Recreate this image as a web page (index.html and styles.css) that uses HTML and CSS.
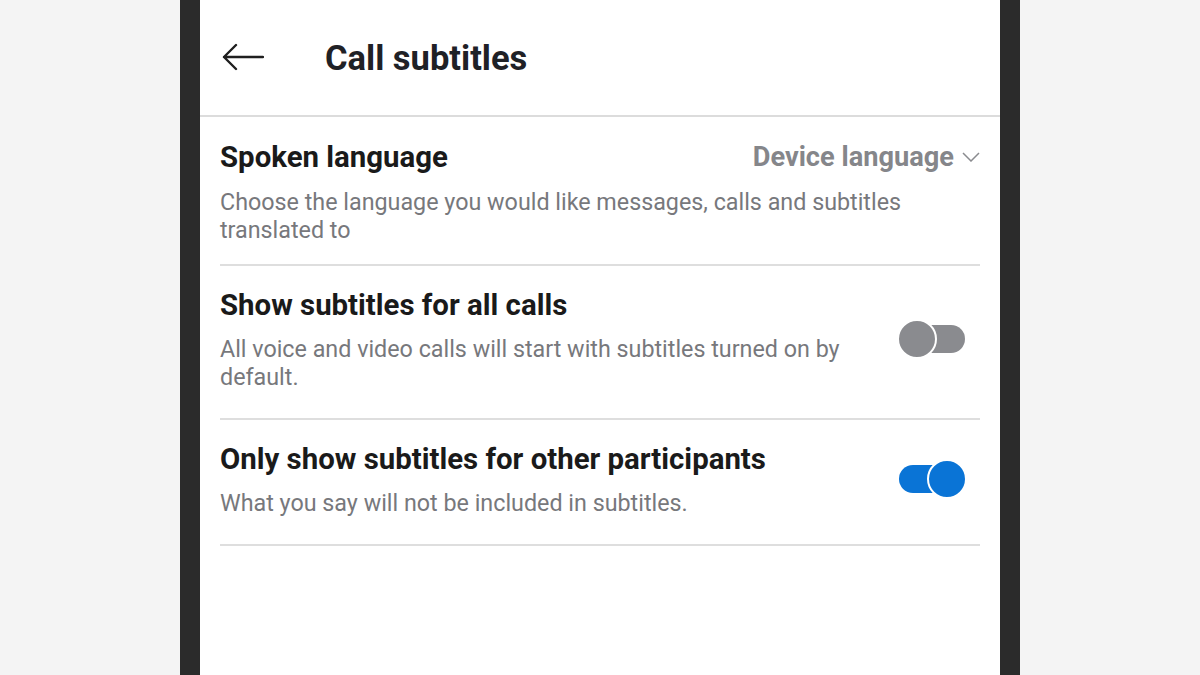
FILE: index.html
```html
<!DOCTYPE html>
<html>
<head>
<meta charset="utf-8">
<link rel="stylesheet" href="styles.css">
</head>
<body>
<div class="phone">
  <div class="screen">
    <header class="header">
      <svg class="back" width="42" height="28" viewBox="0 0 42 28">
        <path d="M41 14H2M14 2L2 14l12 12" fill="none" stroke="#1f1f1f" stroke-width="2.4" stroke-linecap="round" stroke-linejoin="round"/>
      </svg>
      <h1 class="title">Call subtitles</h1>
    </header>
    <div class="list">
      <div class="row row-first">
        <div class="row-head">
          <div class="row-title">Spoken language</div>
          <div class="select">Device language
            <svg class="chev" width="18" height="10" viewBox="0 0 18 10"><path d="M1 1l8 8 8-8" fill="none" stroke="#8a8b8f" stroke-width="1.5"/></svg>
          </div>
        </div>
        <div class="row-desc">Choose the language you would like messages, calls and subtitles translated to</div>
      </div>
      <div class="row">
        <div class="row-body">
          <div class="text">
            <div class="row-title">Show subtitles for all calls</div>
            <div class="row-desc">All voice and video calls will start with subtitles turned on by default.</div>
          </div>
          <div class="toggle off"><span class="track"></span><span class="knob"></span></div>
        </div>
      </div>
      <div class="row">
        <div class="row-body">
          <div class="text">
            <div class="row-title">Only show subtitles for other participants</div>
            <div class="row-desc">What you say will not be included in subtitles.</div>
          </div>
          <div class="toggle on"><span class="track"></span><span class="knob"></span></div>
        </div>
      </div>
    </div>
  </div>
</div>
</body>
</html>
```
FILE: styles.css
```css
* { box-sizing: border-box; }
html, body { margin: 0; padding: 0; }
body {
  background: #f4f4f4;
  font-family: Roboto, "Noto Sans", sans-serif;
  height: 675px;
  overflow: hidden;
  display: flex;
  justify-content: center;
}
.phone {
  width: 840px;
  height: 675px;
  background: #2b2b2b;
  padding: 0 20px;
}
.screen {
  background: #fff;
  height: 100%;
}
.header {
  height: 117px;
  border-bottom: 2px solid #dcdcdc;
  display: flex;
  align-items: center;
  padding: 0 0 0 22px;
}
.back { display: block; margin-top: -2px; }
.title {
  margin: 0 0 0 61px;
  font-size: 34.5px;
  font-weight: 700;
  color: #1f2126;
  letter-spacing: 0;
}
.list { padding: 0 20px; }
.row {
  border-bottom: 2px solid #dedede;
  padding: 21px 0 27px;
}
.row-first { padding: 22px 0 20px; }
.row-head {
  display: flex;
  justify-content: space-between;
  align-items: center;
}
.row-title {
  font-size: 29.4px;
  font-weight: 700;
  color: #1a1a1a;
  line-height: 36px;
}
.select {
  font-size: 27.2px;
  font-weight: 700;
  color: #85868a;
  display: flex;
  align-items: center;
  gap: 8px;
}
.chev { display: block; }
.row-desc {
  margin-top: 12px;
  font-size: 23.3px;
  color: #77787c;
  line-height: 28px;
}
.row-first .row-desc { padding-right: 70px; margin-top: 13px; }
.row-body {
  display: flex;
  justify-content: space-between;
  align-items: flex-start;
}
.text { flex: 1; padding-right: 50px; }
.toggle {
  position: relative;
  width: 70px;
  height: 40px;
  margin-top: 32px;
  margin-right: 13px;
}
.toggle .track {
  position: absolute;
  top: 6px;
  height: 28px;
  width: 40px;
}
.toggle .knob {
  position: absolute;
  top: 0;
  width: 40px;
  height: 40px;
  border-radius: 50%;
  border: 2px solid #fff;
}
.toggle.off .track { left: 28px; background: #8a8b8f; border-radius: 0 14px 14px 0; }
.toggle.off .knob { left: 0; background: #8a8b8f; }
.toggle.on .track { left: 2px; background: #0a74d6; border-radius: 14px 0 0 14px; }
.toggle.on .knob { left: 30px; background: #0a74d6; }
.row:nth-child(3) .toggle { margin-top: 18px; }
```
